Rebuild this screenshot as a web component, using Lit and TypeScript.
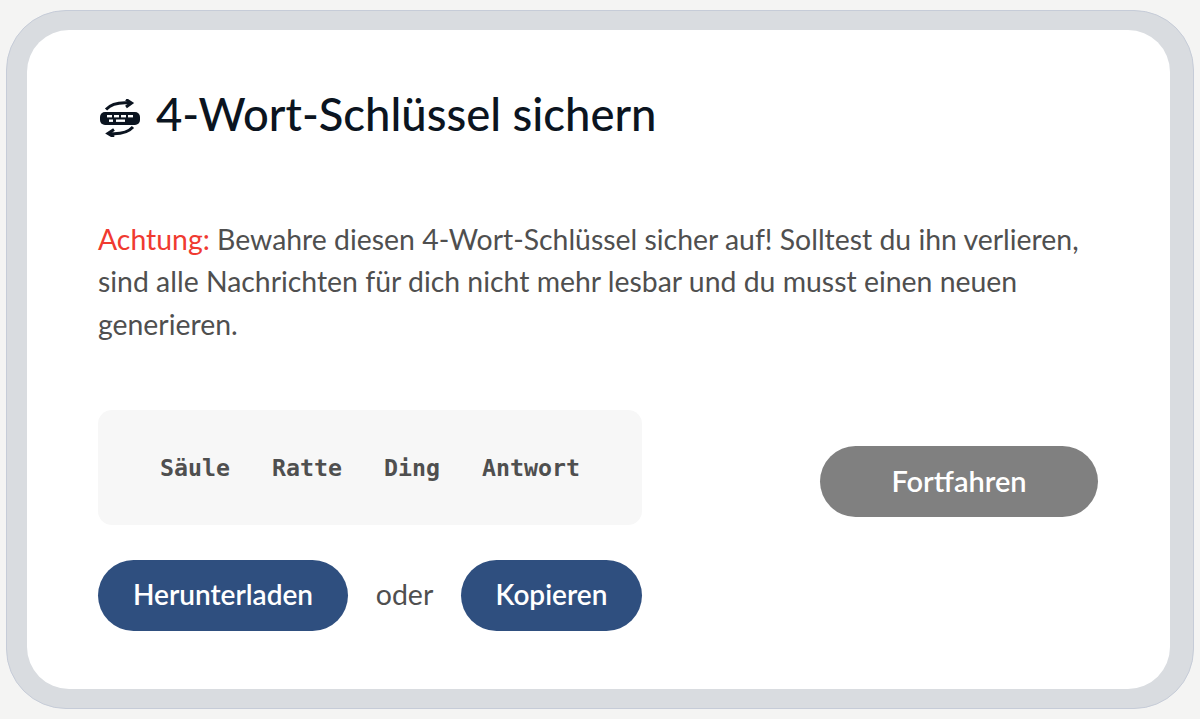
import { html, LitElement, css, TemplateResult } from "lit";
import { customElement } from "lit/decorators.js";

@customElement("app-root")
export class AppRoot extends LitElement {
  static styles = css`
    :host {
      display: block;
      box-sizing: border-box;
      height: 719px;
      padding: 10px 6px;
      background: #f4f4f3;
      font-family: Lato, "Open Sans", sans-serif;
      color: #4f4f4f;
    }

    .frame {
      box-sizing: border-box;
      height: 699px;
      padding: 19px 23px 19px 20px;
      background: #d9dce0;
      border: 1px solid #c6ccd8;
      border-radius: 60px;
    }

    .card {
      box-sizing: border-box;
      height: 659px;
      padding: 56px 72px 0 71px;
      background: #fff;
      border-radius: 42px;
    }

    h1 {
      display: flex;
      align-items: center;
      gap: 16px;
      margin: 0;
      height: 54px;
      font-size: 45.4px;
      font-weight: 500;
      color: #0b1420;
    }

    h1 svg {
      width: 40px;
      height: 38px;
      flex: none;
      margin: 10px 0 0 2px;
    }

    p {
      margin: 77.5px 0 0;
      width: 1000px;
      font-size: 28.4px;
      line-height: 42.5px;
    }

    .warn {
      color: #f03a30;
    }

    .actions {
      display: flex;
      justify-content: space-between;
      align-items: flex-start;
      margin-top: 65px;
    }

    .left {
      display: flex;
      flex-direction: column;
      gap: 35px;
      width: 544px;
    }

    .key {
      display: flex;
      justify-content: center;
      align-items: center;
      gap: 42px;
      height: 115px;
      background: #f7f7f7;
      border-radius: 14px;
      font-family: "DejaVu Sans Mono", monospace;
      font-size: 23.25px;
      font-weight: 700;
    }

    .row {
      display: flex;
      align-items: center;
      justify-content: space-between;
    }

    .or {
      font-size: 28.5px;
      padding-bottom: 3px;
    }

    button {
      height: 71px;
      padding: 0 0 3px;
      border: 0;
      border-radius: 36px;
      background: #2f4f7f;
      color: #fff;
      font: 600 28px Lato, sans-serif;
    }

    .download {
      width: 250px;
    }

    .copy {
      width: 181px;
    }

    .next {
      width: 278px;
      margin-top: 36px;
      background: #808080;
      font-size: 29px;
    }
  `;

  private renderIcon(): TemplateResult {
    return html`<svg viewBox="0 0 40 38" aria-hidden="true">
      <rect x="0" y="13" width="40" height="13" rx="5" fill="#0b1420" />
      <g fill="#fff">
        <rect x="7" y="16" width="5" height="2.4" />
        <rect x="14" y="16" width="5" height="2.4" />
        <rect x="21" y="16" width="5" height="2.4" />
        <rect x="28" y="16" width="5" height="2.4" />
        <rect x="9" y="20.5" width="4" height="2.4" />
        <rect x="16" y="20.5" width="9" height="2.4" />
      </g>
      <g fill="none" stroke="#0b1420" stroke-width="3">
        <path d="M6 10.5c5-5.5 13-7.5 24-6.5" />
        <path d="M26 0.5l5.5 3.5-5.5 4" />
        <path d="M33 28c-5 5.500-13 7.500-24 6.500" />
        <path d="M14 30.500l-6 4 6 3.500" />
      </g>
    </svg>`;
  }

  render(): TemplateResult {
    return html`<div class="frame">
      <main class="card">
        <h1>${this.renderIcon()}4-Wort-Schlüssel sichern</h1>
        <p>
          <span class="warn">Achtung:</span> Bewahre diesen 4-Wort-Schlüssel sicher auf! Solltest du
          ihn verlieren, sind alle Nachrichten für dich nicht mehr lesbar und du musst einen neuen
          generieren.
        </p>
        <div class="actions">
          <div class="left">
            <div class="key">
              <span>Säule</span><span>Ratte</span><span>Ding</span><span>Antwort</span>
            </div>
            <div class="row">
              <button class="download">Herunterladen</button>
              <span class="or">oder</span>
              <button class="copy">Kopieren</button>
            </div>
          </div>
          <button class="next">Fortfahren</button>
        </div>
      </main>
    </div>`;
  }
}
